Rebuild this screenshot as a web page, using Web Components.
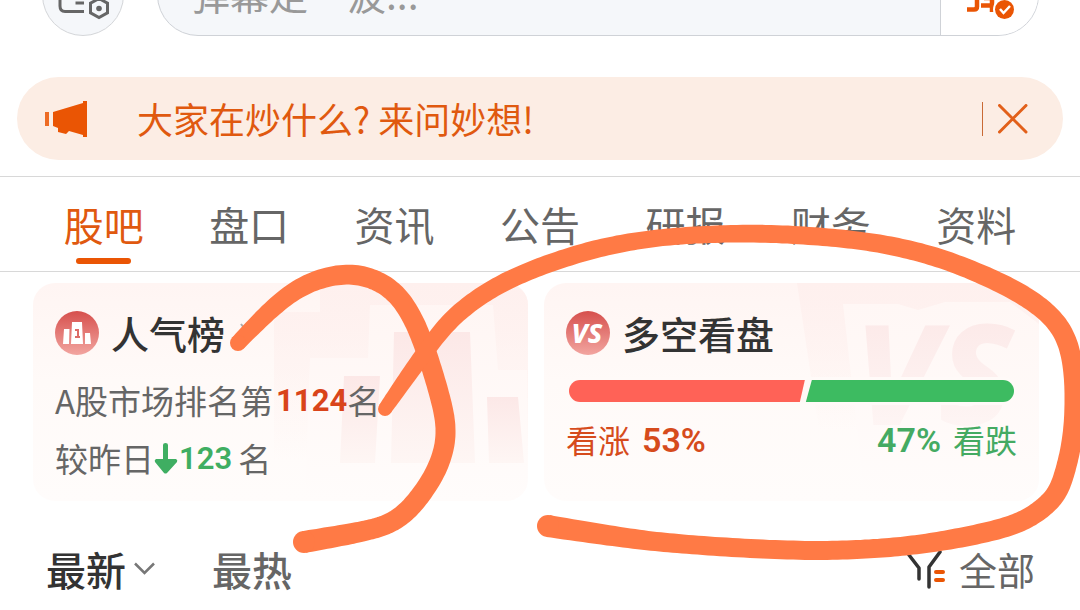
<!DOCTYPE html>
<html lang="zh-CN">
<head>
<meta charset="utf-8">
<meta name="viewport" content="width=device-width, initial-scale=1">
<title>股吧</title>
<style>
  body {
    margin: 0;
    background: #fff;
    color: #666;
    font-family: "Noto Sans CJK SC", sans-serif;
    overflow: hidden;
  }
</style>
</head>
<body>
<stock-page>
  <top-bar></top-bar>
  <ask-banner>大家在炒什么? 来问妙想!</ask-banner>
  <tab-nav></tab-nav>
  <card-row>
    <rank-card></rank-card>
    <vote-card up="53" down="47"></vote-card>
  </card-row>
  <feed-filter></feed-filter>
</stock-page>

<script>
const define = (name, html, setup) => {
  const template = document.createElement('template');
  template.innerHTML = html;
  customElements.define(name, class extends HTMLElement {
    constructor() {
      super();
      this.attachShadow({ mode: 'open' }).append(template.content.cloneNode(true));
      if (setup) setup(this, this.shadowRoot);
    }
  });
};

define('stock-page', `
  <style>
    :host { display: block; position: relative; }
    ink-marks { position: absolute; top: 0; left: 0; }
  </style>
  <slot></slot>
  <ink-marks></ink-marks>
`);

define('top-bar', `
  <style>
    :host { display: flex; align-items: flex-end; gap: 33px; height: 36px; padding: 0 41px 0 42px; overflow: hidden; }
    button { font: inherit; padding: 0; cursor: pointer; }
    .danmu { flex: none; width: 82px; height: 82px; border: 1px solid #d4d6d9; border-radius: 50%; background: #f5f7fa; }
    .field { flex: 1; display: flex; box-sizing: border-box; height: 82px; border: 1px solid #cfd2d7; border-radius: 41px; background: #f5f7fa; overflow: hidden; }
    input { flex: 1; min-width: 0; border: 0; padding: 0 33px 4px; background: none; font: inherit; font-size: 39px; color: #333; outline: 0; }
    input::placeholder { color: #999; opacity: 1; }
    .send { flex: none; width: 98px; border: 0; border-left: 1px solid #cfd2d7; background: #fff; }
    svg { display: block; }
  </style>
  <button class="danmu" type="button" aria-label="弹幕设置">
    <svg width="80" height="80" viewBox="43 -45 80 80" fill="none" stroke="#666">
      <path d="M84 11.500H65Q60 11.500 60 6V-15Q60-20 65-20H100Q105-20 105-15V-8" stroke-width="3"/>
      <path d="M75.500 3H84" stroke-width="3"/>
      <path d="M99 -1.500L107.500 3.200V12.800L99 17.500L90.500 12.800V3.200Z" stroke-width="3"/>
      <circle cx="99" cy="8.500" r="2.800" fill="#666" stroke="none"/>
    </svg>
  </button>
  <div class="field">
    <input type="text" placeholder="弹幕走一波..." aria-label="弹幕">
    <button class="send" type="button" aria-label="弹">
      <svg width="97" height="80" viewBox="941 -45 97 80">
        <g fill="none" stroke="#ea5504" stroke-width="4.500">
          <path d="M967 9.500H974Q977 9.500 977 6.500V-18H967"/>
          <path d="M981 5.500H993M992 -20V12M984 -2H994"/>
        </g>
        <circle cx="1004.500" cy="9.500" r="11.500" fill="#fff"/>
        <circle cx="1004.500" cy="9.500" r="9.500" fill="#ea5504"/>
        <path d="M1000 9L1003.500 13L1010 6" fill="none" stroke="#fff" stroke-width="2.500"/>
      </svg>
    </button>
  </div>
`);

define('ask-banner', `
  <style>
    :host { display: flex; align-items: center; margin: 41px 17px 16px; height: 83px; padding: 0 35px 0 28px; box-sizing: border-box; border-radius: 42px; background: #fcede4; color: #e0590f; }
    a { flex: 1; margin-left: 49px; padding-bottom: 2px; font-size: 36px; line-height: 48px; color: inherit; text-decoration: none; white-space: nowrap; }
    .close { display: flex; align-items: center; border: 0; border-left: 1px solid #c96a35; height: 34px; padding: 0 0 0 15px; background: none; color: inherit; cursor: pointer; }
    svg { display: block; flex: none; }
  </style>
  <svg width="43" height="38" viewBox="0 0 43 38" fill="#ea5504" aria-hidden="true">
    <path d="M0 12h4v14H0z" opacity=".85"/>
    <path d="M8 12L38 3V1H42V37H38V35L24 31L21 34L13 32V28L8 26Z"/>
  </svg>
  <a href="#ask"><slot></slot></a>
  <button class="close" type="button" aria-label="关闭">
    <svg width="30" height="30" viewBox="0 0 30 30" fill="none" stroke="#e2601a" stroke-width="3" stroke-linecap="round"><path d="M1.500 1.500L28 28M28 1.500L1.500 28"/></svg>
  </button>
`);

define('tab-nav', `
  <style>
    :host { display: block; border: solid #d8d8d8; border-width: 1px 0; padding: 0 31px; }
    nav { display: grid; grid-template-columns: repeat(7, 1fr); }
    a { display: flex; flex-direction: column; align-items: center; gap: 4px; padding: 18px 0 7px; font-size: 40px; line-height: 59px; color: #666; text-decoration: none; white-space: nowrap; }
    a::after { content: ""; width: 55px; height: 6px; border-radius: 3px; }
    a[aria-current] { color: #e0590f; }
    a[aria-current]::after { background: #ea5504; }
  </style>
  <nav></nav>
`, (host, root) => {
  root.querySelector('nav').innerHTML = ['股吧', '盘口', '资讯', '公告', '研报', '财务', '资料']
    .map((t, i) => `<a href="#tab${i}"${i ? '' : ' aria-current="page"'}>${t}</a>`).join('');
});

define('card-row', `
  <style>
    :host { display: grid; grid-template-columns: 1fr 1fr; gap: 16px; padding: 11px 41px 0 33px; }
  </style>
  <slot></slot>
`);

define('info-card', `
  <style>
    :host { display: block; position: relative; box-sizing: border-box; height: 218px; padding: 26px 22px 0; border-radius: 22px; background: linear-gradient(#fff5f3, #fffaf8 45%, #fffcfb); overflow: hidden; }
    .art { position: absolute; top: 0; right: 0; }
    .body { position: relative; }
    .head { display: flex; align-items: center; gap: 12px; height: 48px; }
    h2 { margin: 0; font-size: 38px; line-height: 48px; font-weight: 500; color: #333; white-space: nowrap; }
  </style>
  <div class="art"><slot name="art"></slot></div>
  <div class="body">
    <div class="head"><slot name="icon"></slot><h2><slot name="title"></slot></h2><slot name="more"></slot></div>
    <slot></slot>
  </div>
`);

define('rank-card', `
  <style>
    :host { display: block; }
    svg { display: block; }
    p { display: flex; align-items: center; margin: 0; font-size: 33px; line-height: 56px; white-space: nowrap; }
    p.first { margin-top: 14px; }
    b { font-family: Roboto, sans-serif; font-size: 31px; padding-top: 2px; }
    .hot { color: #d9441a; margin-left: 3px; }
    .down { color: #3fae62; margin: 0 6px 0 1px; font-weight: 600; }
  </style>
  <info-card>
    <svg slot="art" width="255" height="218" viewBox="273 283 255 218" aria-hidden="true">
      <defs>
        <linearGradient id="o" x1="0" y1="0" x2="0" y2="1"><stop stop-color="#fef0ee"/><stop offset="1" stop-color="#fef0ee" stop-opacity="0"/></linearGradient>
        <linearGradient id="i" x1="0" y1="0" x2="0" y2="1"><stop stop-color="#fff6f4"/><stop offset="1" stop-color="#fffcfb"/></linearGradient>
        <linearGradient id="b" x1="0" y1="0" x2="0" y2="1"><stop stop-color="#fce8e7"/><stop offset="1" stop-color="#fef6f4"/></linearGradient>
      </defs>
      <path d="M274 312H320V283H528V460H274Z" fill="url(#o)"/>
      <path d="M310 358H368L370 305H493L498 370H527V501H305Z" fill="url(#i)"/>
      <g fill="url(#b)">
        <path d="M344 376H380L375 463H340Z"/>
        <path d="M394 332H470L475 463H391Z"/>
        <path d="M487 397H518L524 463H489Z"/>
      </g>
    </svg>
    <svg slot="icon" width="44" height="44" viewBox="0 0 44 44" aria-hidden="true">
      <defs><linearGradient id="g" x1="0" y1="0" x2="0" y2="1"><stop stop-color="#d6504d"/><stop offset="1" stop-color="#f2a5a0"/></linearGradient></defs>
      <circle cx="22" cy="22" r="22" fill="url(#g)"/>
      <path d="M9 18H14.500L14 33H8ZM17 11H27L28 33H16ZM30 22H35L36 33H30Z" fill="#fff"/>
      <path d="M20 19H23V26M20 26H25" fill="none" stroke="#dd6c67" stroke-width="2"/>
    </svg>
    <span slot="title">人气榜</span>
    <svg slot="more" width="12" height="20" viewBox="0 0 12 20" fill="none" stroke="#aaa" stroke-width="2" aria-hidden="true"><path d="M4 1L11 10L4 19"/></svg>
    <p class="first">A股市场排名第<b class="hot">1124</b>名</p>
    <p>较昨日<svg width="24" height="31" viewBox="0 0 24 31" role="img" aria-label="下降" fill="#3fae62"><path d="M9 2Q9 0 11.500 0T14 2V16H22Q24 17 23 19L13 30Q11.500 31 10 30L1 19Q0 17 2 16H9Z"/></svg><b class="down">123</b>名</p>
  </info-card>
`);

define('vote-card', `
  <style>
    :host { display: block; }
    .art { display: block; }
    .badge { display: block; }
    text { font-family: "Noto Sans", sans-serif; font-weight: 800; font-style: italic; }
    .bar { display: flex; height: 22px; margin: 23px 3px 0; border-radius: 11px; overflow: hidden; outline: 3px solid #fffaf8; background: #fff8f6; }
    .bar i { display: block; }
    .bar .u { background: #ff6257; clip-path: polygon(0 0, 100% 0, calc(100% - 5px) 100%, 0 100%); }
    .bar .d { background: #3dbb61; clip-path: polygon(7px 0, 100% 0, 100% 100%, 1px 100%); }
    .legend { display: flex; justify-content: space-between; margin-top: 12px; font-size: 32px; line-height: 48px; white-space: nowrap; }
    .legend span { display: flex; align-items: center; gap: 12px; }
    .legend .u { color: #d64b1c; }
    .legend .d { color: #44aa62; }
    b { font-family: Roboto, sans-serif; font-size: 34px; font-weight: 600; padding-top: 2px; }
  </style>
  <info-card>
    <svg class="art" slot="art" width="245" height="218" viewBox="794 283 245 218" aria-hidden="true">
      <defs>
        <linearGradient id="o" x1="0" y1="0" x2="0" y2="1"><stop stop-color="#fef0ee"/><stop offset="1" stop-color="#fef0ee" stop-opacity="0"/></linearGradient>
        <linearGradient id="i" x1="0" y1="0" x2="0" y2="1"><stop stop-color="#fff7f5"/><stop offset="1" stop-color="#fffcfb"/></linearGradient>
        <linearGradient id="w" x1="0" y1="0" x2="0" y2="1"><stop offset=".2" stop-color="#fce9e8"/><stop offset=".85" stop-color="#fef6f5"/></linearGradient>
      </defs>
      <path d="M797 283H1039V430H819Z" fill="url(#o)"/>
      <path d="M843 304H898L918 310L945 302H1010L1039 324V501H865Z" fill="url(#i)"/>
      <text x="854" y="425" font-size="140" fill="url(#w)">VS</text>
    </svg>
    <svg class="badge" slot="icon" width="44" height="44" viewBox="0 0 44 44" aria-hidden="true">
      <defs><linearGradient id="g" x1="0" y1="0" x2="0" y2="1"><stop stop-color="#d6504d"/><stop offset="1" stop-color="#f2a5a0"/></linearGradient></defs>
      <circle cx="22" cy="22" r="22" fill="url(#g)"/>
      <text x="21" y="32" font-size="27" text-anchor="middle" fill="#fff">VS</text>
    </svg>
    <span slot="title">多空看盘</span>
    <div class="bar"><i class="u"></i><i class="d"></i></div>
    <div class="legend">
      <span class="u">看涨 <b id="up"></b></span>
      <span class="d"><b id="down"></b> 看跌</span>
    </div>
  </info-card>
`, (host, root) => {
  const up = host.getAttribute('up'), down = host.getAttribute('down');
  root.querySelector('#up').textContent = up + '%';
  root.querySelector('#down').textContent = down + '%';
  root.querySelector('.bar .u').style.flex = up;
  root.querySelector('.bar .d').style.flex = down;
});

define('feed-filter', `
  <style>
    :host { display: flex; align-items: center; padding: 38px 45px 11px 46px; }
    button { display: flex; align-items: center; gap: 8px; border: 0; padding: 0; background: none; font: inherit; font-size: 40px; line-height: 60px; font-weight: 500; color: #666; white-space: nowrap; cursor: pointer; }
    .on { color: #333; margin-right: 57px; }
    .all { margin-left: auto; gap: 14px; font-size: 38px; font-weight: 400; }
    svg { display: block; }
  </style>
  <button class="on" type="button">最新<svg width="21" height="14" viewBox="0 0 21 14" fill="none" stroke="#777" stroke-width="2.500" aria-hidden="true"><path d="M1 1.500L10.500 11L20 1.500"/></svg></button>
  <button type="button">最热</button>
  <button class="all" type="button"><svg width="38" height="40" viewBox="0 0 38 40" fill="none" stroke="#333" stroke-width="3.500" stroke-linecap="round" stroke-linejoin="round" aria-hidden="true"><path d="M2 6L12 19V30M33 3L22 18V38"/><path d="M29 23H36M29 31H36" stroke="#ea5504" stroke-width="4"/></svg>全部</button>
`);

/* Freehand marker strokes: each point is x, y and pen width. */
define('ink-marks', `
  <style>
    :host { display: block; width: 100%; pointer-events: none; }
    svg { display: block; width: 100%; height: auto; }
  </style>
  <svg viewBox="0 0 1080 610" fill="#ff7a45" aria-hidden="true"></svg>
`, (host, root) => {
  const strokes = [
    [[238,343,16],[268,312,18],[303,284,19],[345,273,20],[374,279,20],[396,293,20],[413,318,20],[427,353,20],[441,400,20],[447,433,20],[439,467,20],[419,498,20],[403,515,20],[388,524,20],[373,529,20],[350,534,21],[304,542,22]],
    [[385,409,14],[403,383,16],[428,348,17],[450,320,18],[480,296,18],[514,277,18],[558,260,18],[603,247,18],[648,239,17],[692,235,17],[760,233,18],[826,237,18],[871,242,18],[916,251,19],[960,265,19],[1005,285,20],[1034,302,20],[1057,322,20],[1071,350,20],[1075,393,20],[1073,437,20],[1066,468,20],[1060,487,20],[1051,501,20],[1031,517,20],[1005,528,20],[960,538,20],[916,545,19],[871,549,19],[813,551,19],[737,548,19],[670,543,19],[625,538,20],[548,526,22]]
  ];
  const spline = (a, b, c, d, t) => 0.5 * (2 * b + (c - a) * t + (2 * a - 5 * b + 4 * c - d) * t * t + (3 * b - a - 3 * c + d) * t * t * t);
  /* Averages each sample with its neighbours, over a shorter span near the ends. */
  const smooth = (list, span) => list.map((_, i) => {
    const r = Math.min(span, i, list.length - 1 - i);
    const part = list.slice(i - r, i + r + 1);
    return [0, 1, 2].map(n => part.reduce((sum, p) => sum + p[n], 0) / part.length);
  });
  root.querySelector('svg').innerHTML = strokes.map(pts => {
    let s = [];
    for (let i = 0; i < pts.length - 1; i++) {
      const p = [pts[Math.max(i - 1, 0)], pts[i], pts[i + 1], pts[Math.min(i + 2, pts.length - 1)]];
      for (let k = 0; k < 12; k++) s.push([0, 1, 2].map(n => spline(p[0][n], p[1][n], p[2][n], p[3][n], k / 12)));
    }
    s.push(pts[pts.length - 1]);
    s = smooth(smooth(s, 6), 6);
    const left = [], right = [];
    s.forEach(([x, y, w], i) => {
      const a = s[Math.max(i - 1, 0)], b = s[Math.min(i + 1, s.length - 1)];
      const dx = b[0] - a[0], dy = b[1] - a[1], l = Math.hypot(dx, dy) * 2 / w;
      left.push([x - dy / l, y + dx / l]);
      right.unshift([x + dy / l, y - dx / l]);
    });
    const first = s[0], last = s[s.length - 1];
    return `<path d="M${left.concat(right).map(q => q.map(v => v.toFixed(1))).join('L')}Z"/>` +
      [first, last].map(([x, y, w]) => `<circle cx="${x}" cy="${y}" r="${w / 2}"/>`).join('');
  }).join('');
});
</script>
</body>
</html>
